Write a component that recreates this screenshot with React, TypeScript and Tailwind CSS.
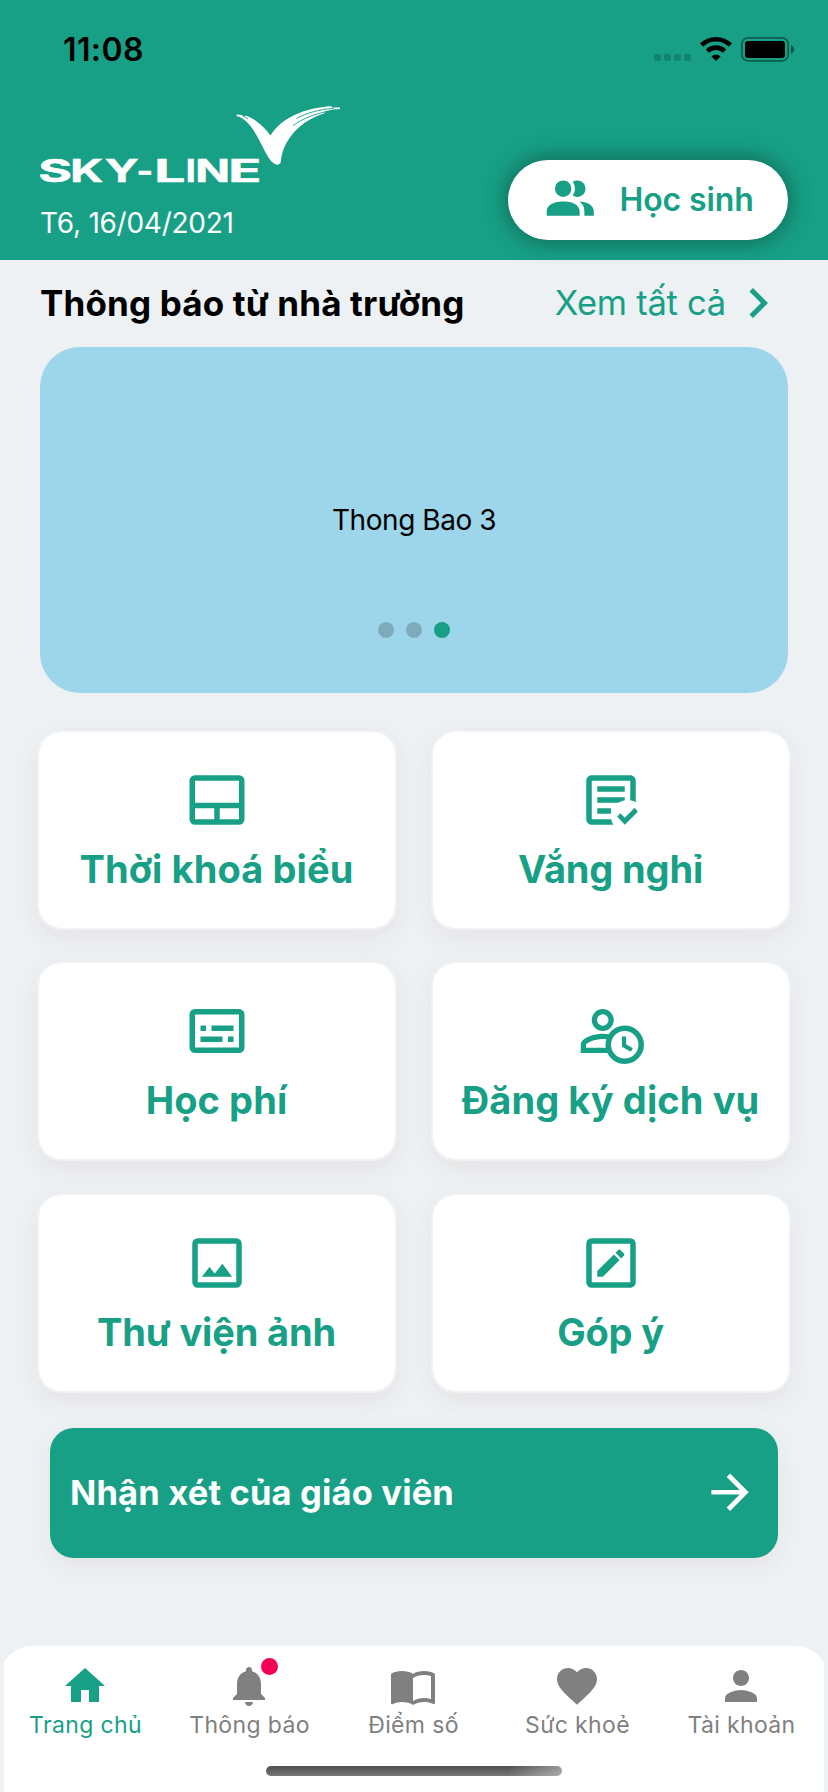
import React from 'react';

const ICONS = {
  people:
    'M16 17V19H2V17S2 13 9 13 16 17 16 17M12.5 7.5A3.5 3.5 0 1 0 9 11A3.5 3.5 0 0 0 12.5 7.5M15.94 13A5.32 5.32 0 0 1 18 17V19H22V17S22 13.37 15.94 13M15 4A3.39 3.39 0 0 0 13.07 4.59A5 5 0 0 1 13.07 10.41A3.39 3.39 0 0 0 15 11A3.5 3.5 0 0 0 15 4Z',
  chevron: 'M8.59 16.58L13.17 12L8.59 7.41L10 6L16 12L10 18L8.59 16.58Z',
  schedule:
    'M4 3H20A2 2 0 0 1 22 5V19A2 2 0 0 1 20 21H4A2 2 0 0 1 2 19V5A2 2 0 0 1 4 3M4 5V13H20V5H4M4 15V19H11V15H4M13 15V19H20V15H13Z',
  absence:
    'M17 21L14.25 18L15.41 16.84L17 18.43L20.59 14.84L21.75 16.25L17 21M12.8 21H5C3.89 21 3 20.11 3 19V5C3 3.89 3.89 3 5 3H19C20.11 3 21 3.89 21 5V12.8C20.39 12.45 19.72 12.2 19 12.08V5H5V19H12.08C12.2 19.72 12.45 20.39 12.8 21M12 17H7V15H12M14.68 13H7V11H17V12.08C16.15 12.22 15.37 12.54 14.68 13M17 9H7V7H17',
  fee: 'M4 4H20A2 2 0 0 1 22 6V18A2 2 0 0 1 20 20H4A2 2 0 0 1 2 18V6A2 2 0 0 1 4 4M4 6V18H20V6H4M6 10H8V12H6V10M10 10H18V12H10V10M6 14H14V16H6V14M16 14H18V16H16V14Z',
  service:
    'M16,14H17.5V16.82L19.94,18.23L19.19,19.53L16,17.69V14M17,12A5,5 0 0,0 12,17A5,5 0 0,0 17,22A5,5 0 0,0 22,17A5,5 0 0,0 17,12M17,10A7,7 0 0,1 24,17A7,7 0 0,1 17,24C14.21,24 11.8,22.36 10.67,20H1V17C1,14.34 6.33,13 9,13C9.6,13 10.34,13.07 11.12,13.21C12.34,11.28 14.5,10 17,10M10,17C10,16.3 10.1,15.62 10.29,15C9.87,14.93 9.43,14.9 9,14.9C6.03,14.9 2.9,16.36 2.9,17V18.1H10.09C10.03,17.74 10,17.38 10,17M9,4A4,4 0 0,1 13,8A4,4 0 0,1 9,12C6.79,12 5,10.21 5,8A4,4 0 0,1 9,4M9,5.9A2.1,2.1 0 0,0 6.9,8A2.1,2.1 0 0,0 9,10.1A2.1,2.1 0 0,0 11.1,8A2.1,2.1 0 0,0 9,5.9Z',
  gallery:
    'M19,19H5V5H19M19,3H5A2,2 0 0,0 3,5V19A2,2 0 0,0 5,21H19A2,2 0 0,0 21,19V5A2,2 0 0,0 19,3M13.96,12.29L11.21,15.83L9.25,13.47L6.5,17H17.5L13.96,12.29Z',
  feedback:
    'M19,19V5H5V19H19M19,3A2,2 0 0,1 21,5V19C21,20.11 20.1,21 19,21H5A2,2 0 0,1 3,19V5A2,2 0 0,1 5,3H19M16.7,9.35L15.7,10.35L13.65,8.3L14.65,7.3C14.86,7.08 15.21,7.08 15.42,7.3L16.7,8.58C16.92,8.79 16.92,9.14 16.7,9.35M7,14.94L13.06,8.88L15.12,10.94L9.06,17H7V14.94Z',
  arrow: 'M4,11V13H16L10.5,18.5L11.92,19.92L19.84,12L11.92,4.08L10.5,5.5L16,11H4Z',
  home: 'M10,20V14H14V20H19V12H22L12,3L2,12H5V20H10Z',
  bell: 'M12 22c1.1 0 2-.9 2-2h-4c0 1.1.89 2 2 2zm6-6v-5c0-3.07-1.64-5.64-4.5-6.32V4c0-.83-.67-1.5-1.5-1.5s-1.5.67-1.5 1.5v.68C7.63 5.36 6 7.92 6 11v5l-2 2v1h16v-1l-2-2z',
  book: 'M21,5C19.89,4.65 18.67,4.5 17.5,4.5C15.55,4.5 13.45,4.9 12,6C10.55,4.9 8.45,4.5 6.5,4.5C4.55,4.5 2.45,4.9 1,6V20.65C1,20.9 1.25,21.15 1.5,21.15C1.6,21.15 1.65,21.1 1.75,21.1C3.1,20.45 5.05,20 6.5,20C8.45,20 10.55,20.4 12,21.5C13.35,20.65 15.8,20 17.5,20C19.15,20 20.85,20.3 22.25,21.05C22.35,21.1 22.4,21.1 22.5,21.1C22.75,21.1 23,20.85 23,20.6V6C22.4,5.55 21.75,5.25 21,5M21,18.5C19.9,18.15 18.7,18 17.5,18C15.8,18 13.35,18.65 12,19.5V8C13.35,7.15 15.8,6.5 17.5,6.5C18.7,6.5 19.9,6.65 21,7V18.5Z',
  heart:
    'M12,21.35L10.55,20.03C5.4,15.36 2,12.27 2,8.5C2,5.41 4.42,3 7.5,3C9.24,3 10.91,3.81 12,5.08C13.09,3.81 14.76,3 16.5,3C19.58,3 22,5.41 22,8.5C22,12.27 18.6,15.36 13.45,20.03L12,21.35Z',
  person:
    'M12 12c2.21 0 4-1.79 4-4s-1.79-4-4-4-4 1.79-4 4 1.79 4 4 4zm0 2c-2.67 0-8 1.34-8 4v2h16v-2c0-2.66-5.33-4-8-4z',
};

function Icon({ name, className }: { name: keyof typeof ICONS; className: string }) {
  return (
    <svg viewBox="0 0 24 24" fill="currentColor" fillRule="evenodd" className={`shrink-0 ${className}`} aria-hidden="true">
      <path d={ICONS[name]} />
    </svg>
  );
}

/* Wordmark letters: left edge, ink offset and horizontal stretch of each. */
const LOGO_LETTERS = [
  { c: 'S', x: 40, bearing: 1.1, stretch: 1.66 },
  { c: 'K', x: 73.3, bearing: 2, stretch: 1.48 },
  { c: 'Y', x: 105.3, bearing: 0.3, stretch: 1.5 },
  { c: '-', x: 138.4, bearing: 1.6, stretch: 1.15 },
  { c: 'L', x: 157.8, bearing: 2, stretch: 1.78 },
  { c: 'I', x: 188, bearing: 2, stretch: 1.15 },
  { c: 'N', x: 198.3, bearing: 2, stretch: 1.47 },
  { c: 'E', x: 231.8, bearing: 2, stretch: 1.76 },
];

function Logo() {
  return (
    <svg width="304" height="84" viewBox="40 104 304 84" className="block overflow-visible" role="img" aria-label="SKY-LINE">
      <g fill="#fff" stroke="#fff" strokeWidth="0.5" fontFamily="Inter, sans-serif" fontWeight="700" fontSize="31">
        {LOGO_LETTERS.map((l) => (
          <text key={l.c} transform={`translate(${l.x - l.bearing * l.stretch} 181.8) scale(${l.stretch} 1)`}>
            {l.c}
          </text>
        ))}
      </g>
      <path
        fill="#fff"
        d="M236.6 114.6C240 114.4 243 115.4 245 116.6L245.6 115.4C255 118.2 264 127 270.6 135.4C281 118.5 304 107.5 331.5 106.3L332 107.6L340 107.5L340 109C333 109.4 329 110 325 111.5L324.4 113.2C304 119.5 290.5 133 284.5 147C281.5 153.5 281.6 158 280.6 162.5C279.8 165 276.5 165.2 274 163.6C268 159.5 263.5 147.5 257.5 137C252 127 246 118.4 236.6 116Z"
      />
      <path d="M296.5 118.6C306 113.2 318 109.6 334 108.2M293 125.6C302 119 313 114.6 326 111.6M242 115.2L248 119" fill="none" stroke="#17a085" strokeWidth="0.9" />
    </svg>
  );
}

function StatusBar() {
  return (
    <div className="flex h-[98px] items-center justify-between pl-[63px] pr-[33px] text-black">
      <span className="mt-[2px] text-[32px] leading-10 font-semibold tracking-[0.4px]">11:08</span>
      <div className="flex items-center">
        <div className="mt-[17px] flex gap-[3px]">
          <i className="h-[7px] w-[7px] rounded-[2px] bg-black/18" />
          <i className="h-[7px] w-[7px] rounded-[2px] bg-black/18" />
          <i className="h-[7px] w-[7px] rounded-[2px] bg-black/18" />
          <i className="h-[7px] w-[7px] rounded-[2px] bg-black/18" />
        </div>
        <svg width="34" height="26" viewBox="0 0 34 26" className="ml-[8px]" aria-hidden="true">
          <g fill="none" stroke="#000" strokeWidth="4.6">
            <path d="M2.6 9.2A20.4 20.4 0 0 1 31.4 9.2" />
            <path d="M8.4 15.2A12.2 12.2 0 0 1 25.6 15.2" />
          </g>
          <path d="M17 25L12.4 20.4A6.6 6.6 0 0 1 21.6 20.4Z" />
        </svg>
        <svg width="55" height="26" viewBox="0 0 55 26" className="ml-[7px]" aria-hidden="true">
          <rect x="1.8" y="1.8" width="46.4" height="23" rx="6.2" fill="none" stroke="#000" strokeOpacity="0.42" strokeWidth="1.8" />
          <rect x="5" y="5" width="40" height="17" rx="3" />
          <path d="M51 9.2C53 10 54 11.6 54 13.4S53 16.8 51 17.6Z" fillOpacity="0.5" />
        </svg>
      </div>
    </div>
  );
}

function Header() {
  return (
    <header className="relative z-10 h-[260px] bg-[#17a085]">
      <StatusBar />
      <div className="flex justify-between px-10">
        <div className="pt-[6px]">
          <Logo />
          <p className="mt-[18px] text-[28px] leading-[34px] tracking-[-0.27px] text-white">T6, 16/04/2021</p>
        </div>
        <button className="mt-[62px] flex h-20 w-[280px] items-center rounded-full bg-white pl-[34px] text-[#17a085] shadow-[0_0_24px_rgba(0,0,0,0.42)]">
          <Icon name="people" className="mb-[2px] h-[56.5px] w-[56.5px]" />
          <span className="ml-[21px] text-[32px] leading-10 font-semibold tracking-[-0.13px]">Học sinh</span>
        </button>
      </div>
    </header>
  );
}

function Announcements() {
  return (
    <section className="px-10">
      <div className="flex h-[87px] items-center justify-between pb-[2px]">
        <h1 className="text-[35px] leading-[44px] font-bold tracking-[0.14px] text-black">Thông báo từ nhà trường</h1>
        <a className="flex items-center text-[#17a085]">
          <span className="text-[34.5px] leading-[44px] tracking-[-0.25px]">Xem tất cả</span>
          <Icon name="chevron" className="ml-[2px] h-[60px] w-[60px]" />
        </a>
      </div>
      <div className="relative flex h-[346px] items-center justify-center rounded-[40px] bg-[#9dd6eb]">
        <p className="text-[28px] leading-9 tracking-[-0.45px] text-black">Thong Bao 3</p>
        <div className="absolute inset-x-0 bottom-[55px] flex justify-center gap-3">
          <i className="h-4 w-4 rounded-full bg-black/20" />
          <i className="h-4 w-4 rounded-full bg-black/20" />
          <i className="h-4 w-4 rounded-full bg-[#17a085]" />
        </div>
      </div>
    </section>
  );
}

const CARDS: { icon: keyof typeof ICONS; label: string; tracking: string }[] = [
  { icon: 'schedule', label: 'Thời khoá biểu', tracking: 'tracking-[0.1px]' },
  { icon: 'absence', label: 'Vắng nghỉ', tracking: 'tracking-[-0.15px]' },
  { icon: 'fee', label: 'Học phí', tracking: 'tracking-[0.1px]' },
  { icon: 'service', label: 'Đăng ký dịch vụ', tracking: 'tracking-[0.1px]' },
  { icon: 'gallery', label: 'Thư viện ảnh', tracking: 'tracking-[-0.17px]' },
  { icon: 'feedback', label: 'Góp ý', tracking: 'tracking-[-0.19px]' },
];

function Cards() {
  return (
    <div className="mt-[37px] grid grid-cols-2 grid-rows-[200px_201px_200px] gap-x-[34px] gap-y-[31px] px-[37px]">
      {CARDS.map((c) => (
        <button
          key={c.label}
          className="flex h-[200px] flex-col items-center rounded-[24px] border-2 border-[#eff1f5] bg-white bg-clip-padding pt-[35px] pr-[1px] text-[#17a085] shadow-[0_8px_20px_rgba(210,190,185,0.24)]"
        >
          <Icon name={c.icon} className="h-[66px] w-[66px]" />
          <span className={`mt-[13px] text-[38px] leading-[46px] font-bold whitespace-nowrap ${c.tracking}`}>{c.label}</span>
        </button>
      ))}
    </div>
  );
}

const TABS: { icon: keyof typeof ICONS; label: string; active?: boolean; badge?: boolean }[] = [
  { icon: 'home', label: 'Trang chủ', active: true },
  { icon: 'bell', label: 'Thông báo', badge: true },
  { icon: 'book', label: 'Điểm số' },
  { icon: 'heart', label: 'Sức khoẻ' },
  { icon: 'person', label: 'Tài khoản' },
];

function TabBar() {
  return (
    <div className="mx-1 mt-[88px] h-[146px] overflow-hidden">
      <nav className="-mx-1 h-full rounded-t-[32px] bg-white">
        <div className="ml-[3px] grid w-[820px] grid-cols-5 pt-4">
          {TABS.map((t) => (
            <a key={t.label} className={`relative flex flex-col items-center ${t.active ? 'text-[#17a085]' : 'text-[#808080]'}`}>
              <Icon name={t.icon} className="h-12 w-12" />
              {t.badge && <i className="absolute -top-1 left-[94px] h-[17px] w-[17px] rounded-full bg-[#f50057]" />}
              <span className="pl-[1px] text-[23px] leading-[30px] tracking-[0.36px]">{t.label}</span>
            </a>
          ))}
        </div>
        <div className="mx-auto mt-[26px] h-[10px] w-[296px] rounded-full bg-[linear-gradient(to_right,transparent_82%,rgba(255,255,255,0.4)),linear-gradient(to_bottom,#4f4f4f,#777)]" />
      </nav>
    </div>
  );
}

export default function App() {
  return (
    <div className="h-[1792px] w-[828px] overflow-hidden bg-[#edf1f4] font-['Inter',sans-serif]">
      <Header />
      <Announcements />
      <Cards />
      <button className="mx-[50px] mt-[35px] flex h-[130px] w-[728px] items-center justify-between rounded-[24px] bg-[#17a085] pr-5 pl-5 text-white shadow-[0_8px_20px_rgba(210,190,185,0.24)]">
        <span className="text-[34.5px] leading-[44px] font-bold tracking-[0.15px]">Nhận xét của giáo viên</span>
        <Icon name="arrow" className="mb-[2px] h-[56.5px] w-[56.5px]" />
      </button>
      <TabBar />
    </div>
  );
}
